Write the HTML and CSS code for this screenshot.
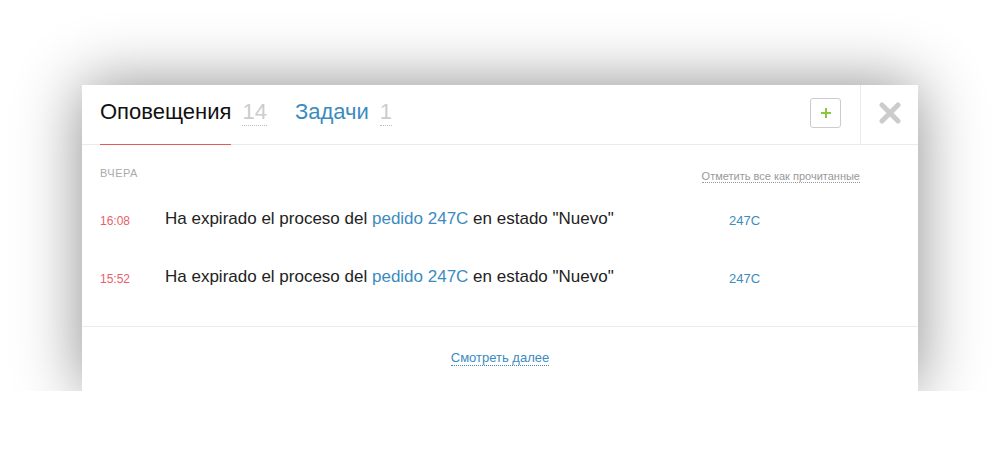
FILE: index.html
```html
<!DOCTYPE html>
<html lang="ru">
<head>
    <meta charset="UTF-8">
    <title>Оповещения</title>
    <link rel="stylesheet" href="styles.css">
</head>
<body>
    <div class="panel">
        <!-- Шапка с вкладками -->
        <div class="panel-header">
            <div class="tabs">
                <div class="tab tab-active">
                    <span class="tab-title">Оповещения</span>
                    <span class="tab-count">14</span>
                </div>
                <div class="tab">
                    <span class="tab-title link">Задачи</span>
                    <span class="tab-count">1</span>
                </div>
            </div>
            <div class="header-actions">
                <button class="add-button">
                    <svg width="12" height="12" viewBox="0 0 12 12"><path d="M6 1v10M1 6h10" stroke="#8cc63f" stroke-width="2"/></svg>
                </button>
            </div>
            <div class="close-box">
                <svg width="22" height="22" viewBox="0 0 22 22"><path d="M3 3L19 19M19 3L3 19" stroke="#cccccc" stroke-width="5" stroke-linecap="round"/></svg>
            </div>
        </div>

        <!-- Список оповещений -->
        <div class="panel-body">
            <div class="day-row">
                <span class="day-label">Вчера</span>
                <span class="mark-read">Отметить все как прочитанные</span>
            </div>
            <div class="notice">
                <span class="notice-time">16:08</span>
                <span class="notice-text">Ha expirado el proceso del <span class="link">pedido 247C</span> en estado "Nuevo"</span>
                <span class="notice-ref link">247C</span>
            </div>
            <div class="notice">
                <span class="notice-time">15:52</span>
                <span class="notice-text">Ha expirado el proceso del <span class="link">pedido 247C</span> en estado "Nuevo"</span>
                <span class="notice-ref link">247C</span>
            </div>
        </div>

        <div class="panel-footer">
            <span class="more-link">Смотреть далее</span>
        </div>
    </div>
</body>
</html>
```

FILE: styles.css
```css
body {
    margin: 0;
    background-color: #ffffff;
    font-family: 'Liberation Sans', Arial, sans-serif;
}

.panel {
    margin: 85px 0 0 82px;
    width: 836px;
    background-color: #ffffff;
    box-shadow: 0 0 60px rgba(0, 0, 0, 0.45);
}

.link {
    color: #3b8bbf;
}

/* Шапка */
.panel-header {
    display: flex;
    height: 59px;
    border-bottom: 1px solid #ebebeb;
}

.tabs {
    display: flex;
    flex: 1;
    padding-left: 18px;
    gap: 28px;
}

.tab {
    display: flex;
    align-items: center;
    gap: 11px;
    height: 59px;
    font-size: 22px;
}

.tab-title {
    display: flex;
    align-items: center;
    height: 59px;
    box-sizing: border-box;
    padding-bottom: 6px;
}

.tab-active .tab-title {
    color: #111111;
    border-bottom: 1px solid #e35b5b;
    margin-bottom: -1px;
    height: 60px;
}

.tab-count {
    color: #cccccc;
    border-bottom: 1px dotted #bbbbbb;
    line-height: 22px;
    padding-bottom: 2px;
    margin-top: -2px;
}

.header-actions {
    display: flex;
    align-items: center;
    padding-right: 19px;
}

.add-button {
    width: 31px;
    height: 30px;
    background: #ffffff;
    border: 1px solid #cccccc;
    border-radius: 3px;
    display: flex;
    align-items: center;
    justify-content: center;
    padding: 0;
    margin-bottom: 4px;
}

.close-box {
    width: 57px;
    border-left: 1px solid #ebebeb;
    display: flex;
    align-items: center;
    justify-content: center;
    padding-bottom: 4px;
}

/* Список */
.panel-body {
    padding: 18px 58px 20px 18px;
    border-bottom: 1px solid #ebebeb;
}

.day-row {
    display: flex;
    justify-content: space-between;
    align-items: flex-end;
    height: 16px;
    margin-bottom: 11px;
}

.day-label {
    font-size: 11px;
    color: #aaaaaa;
    text-transform: uppercase;
    letter-spacing: 0.5px;
}

.mark-read {
    font-size: 11px;
    color: #999999;
    border-bottom: 1px dotted #999999;
    margin-bottom: -4px;
}

.notice {
    display: grid;
    grid-template-columns: 65px 564px 1fr;
    align-items: center;
    height: 58px;
}

.notice-time {
    font-size: 12px;
    color: #e8606a;
    padding-top: 3px;
}

.notice-text {
    font-size: 17px;
    color: #222222;
}

.notice-ref {
    font-size: 13px;
    padding-top: 3px;
}

/* Подвал */
.panel-footer {
    display: flex;
    justify-content: center;
    align-items: center;
    height: 64px;
    box-sizing: border-box;
    padding-bottom: 2px;
}

.more-link {
    font-size: 13px;
    color: #3b8bbf;
    border-bottom: 1px dotted #3b8bbf;
}
```
